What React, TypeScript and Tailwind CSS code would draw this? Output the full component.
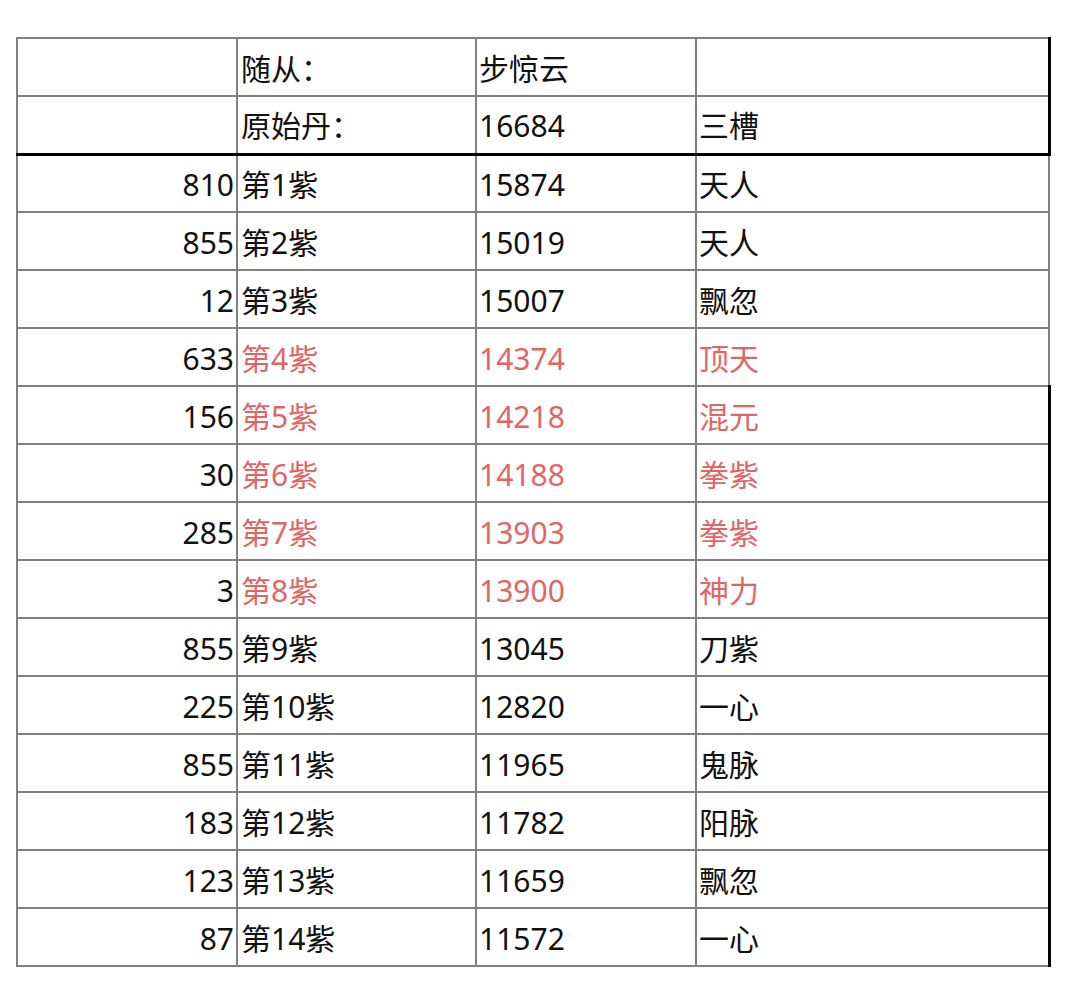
const header = [
  ["", "随从：", "步惊云", ""],
  ["", "原始丹：", "16684", "三槽"],
];

const rows: [string, string, string, string, boolean][] = [
  ["810", "第1紫", "15874", "天人", false],
  ["855", "第2紫", "15019", "天人", false],
  ["12", "第3紫", "15007", "飘忽", false],
  ["633", "第4紫", "14374", "顶天", true],
  ["156", "第5紫", "14218", "混元", true],
  ["30", "第6紫", "14188", "拳紫", true],
  ["285", "第7紫", "13903", "拳紫", true],
  ["3", "第8紫", "13900", "神力", true],
  ["855", "第9紫", "13045", "刀紫", false],
  ["225", "第10紫", "12820", "一心", false],
  ["855", "第11紫", "11965", "鬼脉", false],
  ["183", "第12紫", "11782", "阳脉", false],
  ["123", "第13紫", "11659", "飘忽", false],
  ["87", "第14紫", "11572", "一心", false],
];

export default function App() {
  return (
    <div
      className="min-h-screen bg-white pt-[37px] pl-[16px] text-[30px] text-[#111]"
      style={{ fontFamily: '"Noto Sans", "Noto Sans CJK SC", sans-serif' }}
    >
      <table className="w-[1032px] table-fixed border-collapse">
        <colgroup>
          <col className="w-[220px]" />
          <col className="w-[239px]" />
          <col className="w-[220px]" />
          <col className="w-[353px]" />
        </colgroup>
        <tbody>
          {header.map((r, i) => (
            <tr key={i} className="h-[58px]">
              <td className={`border-2 border-[#808080] ${i === 1 ? "border-b-[3px] border-b-black" : ""}`}></td>
              <td className={`border-2 border-[#808080] pl-[3px] pt-[2px] ${i === 1 ? "border-b-[3px] border-b-black" : ""}`}>{r[1]}</td>
              <td className={`border-2 border-[#808080] pl-[2px] pt-[2px] ${i === 1 ? "border-b-[3px] border-b-black" : ""}`}>{r[2]}</td>
              <td className={`border-2 border-[#808080] border-r-[3px] border-r-black pl-[2px] pt-[2px] ${i === 1 ? "border-b-[3px] border-b-black" : ""}`}>{r[3]}</td>
            </tr>
          ))}
          {rows.map(([n, name, val, tag, red], i) => {
            const c = red ? "text-[#e06666]" : "";
            const darkRight = i >= 4;
            return (
              <tr key={i} className="h-[58px]">
                <td className="border-2 border-[#808080] pr-[2px] pt-[2px] text-right">{n}</td>
                <td className={`border-2 border-[#808080] pl-[3px] pt-[2px] ${c}`}>{name}</td>
                <td className={`border-2 border-[#808080] pl-[2px] pt-[2px] ${c}`}>{val}</td>
                <td
                  className={`border-2 border-[#808080] pl-[2px] pt-[2px] ${c} ${darkRight ? "border-r-[3px] border-r-black" : ""}`}
                >
                  {tag}
                </td>
              </tr>
            );
          })}
        </tbody>
      </table>
    </div>
  );
}
